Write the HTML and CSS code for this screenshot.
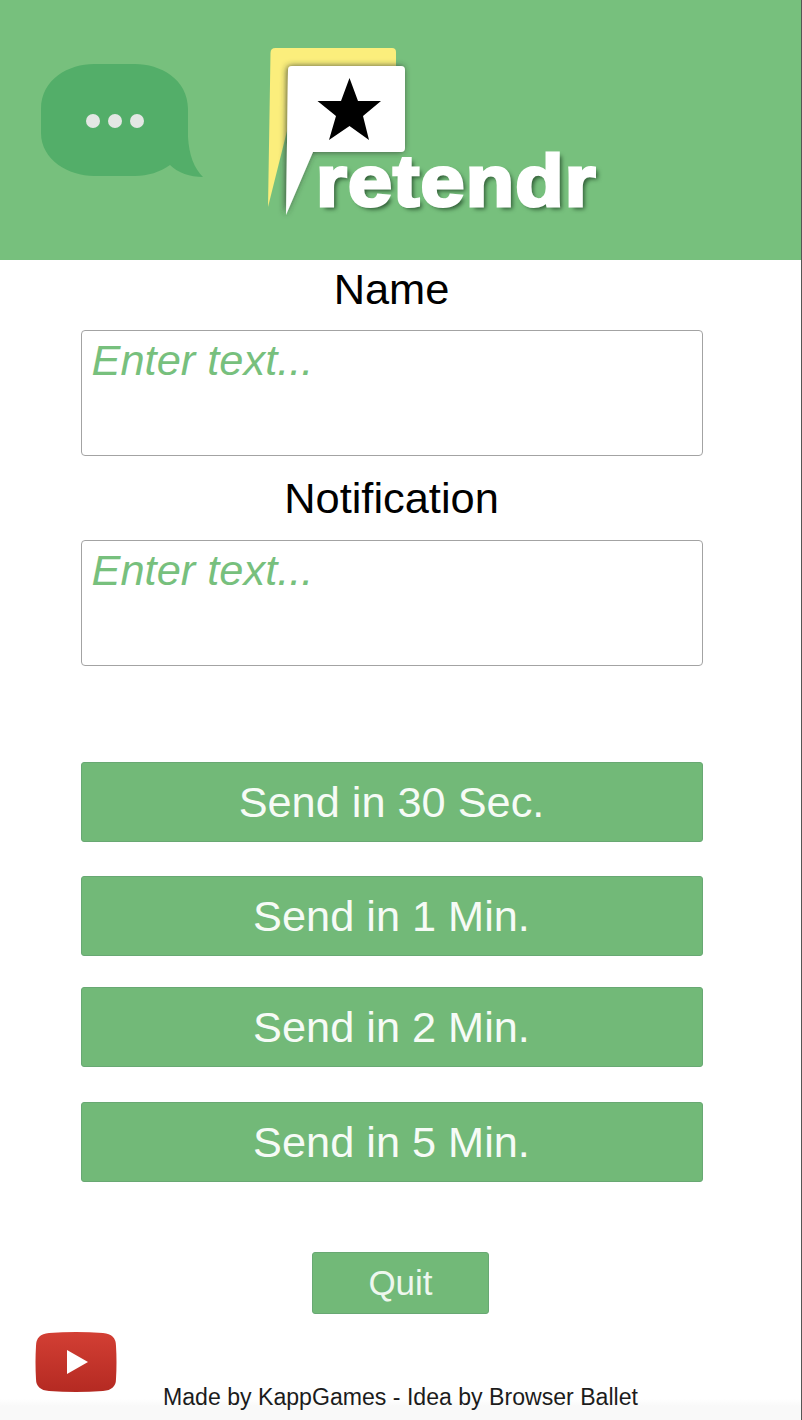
FILE: index.html
```html
<!DOCTYPE html>
<html lang="en">
<head>
    <meta charset="UTF-8">
    <meta name="viewport" content="width=device-width, initial-scale=1.0">
    <title>Pretendr</title>
    <link rel="stylesheet" href="styles.css">
</head>
<body>
    <header class="top">
        <svg class="bubble" width="166" height="116" viewBox="0 0 166 116">
            <path fill="#53ae69" d="M54 1H95C120 1 148 16 148 46V74C149 92 154 105 163 114C150 114 138 110 130 102C120 109 108 113 95 113H54C29 113 1 97 1 70V46C1 16 29 1 54 1Z"/>
            <circle cx="53" cy="58" r="7" fill="#e4e7e4"/>
            <circle cx="75" cy="58" r="7" fill="#e4e7e4"/>
            <circle cx="97" cy="58" r="7" fill="#e4e7e4"/>
        </svg>
        <div class="logo">
            <svg width="150" height="180" viewBox="0 0 150 180">
                <defs>
                    <filter id="soft" x="-20%" y="-20%" width="140%" height="140%">
                        <feDropShadow dx="-1" dy="0" stdDeviation="3" flood-color="#2e3a2e" flood-opacity="0.85"/>
                    </filter>
                </defs>
                <path fill="#fbee7c" d="M2.500 6Q2.500 1 7.500 1H124Q128 1 128 5V40H30L0 160Z"/>
                <path fill="#fff" filter="url(#soft)" d="M24 19H133Q137 19 137 23V101Q137 105 133 105H45L18 168L20 23Q20 19 24 19Z"/>
                <path fill="#000" d="M81.500 31L90 54H113L95 69L101 93L81.500 79L61 93L68 69L49.500 54H73Z"/>
            </svg>
            <span class="logo-text">retendr</span>
        </div>
    </header>

    <main class="content">
        <label class="title first">Name</label>
        <textarea class="field" placeholder="Enter text..."></textarea>
        <label class="title second">Notification</label>
        <textarea class="field" placeholder="Enter text..."></textarea>

        <div class="sends">
            <button class="send">Send in 30 Sec.</button>
            <button class="send">Send in 1 Min.</button>
            <button class="send">Send in 2 Min.</button>
            <button class="send">Send in 5 Min.</button>
        </div>

        <button class="quit">Quit</button>
    </main>

    <footer class="bottom">
        <svg class="yt" width="82" height="61" viewBox="0 0 82 61">
            <defs>
                <linearGradient id="red" x1="0" y1="0" x2="0" y2="1">
                    <stop offset="0" stop-color="#d33f34"/>
                    <stop offset="1" stop-color="#b52a22"/>
                </linearGradient>
            </defs>
            <path fill="url(#red)" d="M14 1Q41 -1 68 1Q81 2 81 14Q82 30 81 47Q81 58 68 59Q41 61 14 59Q1 58 1 47Q0 30 1 14Q1 2 14 1Z"/>
            <path fill="#fff" d="M32 18L53 30L32 42Z"/>
        </svg>
        <p class="credit">Made by KappGames - Idea by Browser Ballet</p>
    </footer>
</body>
</html>
```

FILE: styles.css
```css
html, body {
    margin: 0;
    height: 1420px;
    overflow: hidden;
}
body {
    font-family: "Liberation Sans", Arial, sans-serif;
    background-color: #fff;
    border-right: 1px solid #555;
    box-sizing: border-box;
    width: 802px;
}
.top {
    display: flex;
    align-items: flex-start;
    height: 260px;
    margin-right: -1px;
    padding: 47px 0 0 40px;
    box-sizing: border-box;
    background-color: #77c07d;
}
.bubble {
    margin-top: 16px;
}
.logo {
    position: relative;
    margin-left: 62px;
    width: 340px;
    height: 180px;
}
.logo-text {
    position: absolute;
    left: 48px;
    top: 89px;
    font-size: 72px;
    line-height: 90px;
    font-weight: bold;
    letter-spacing: 1px;
    color: #fff;
    -webkit-text-stroke: 3px #fff;
    text-shadow: 3px 3px 4px #2f5a35;
    transform: scaleX(1.1);
    transform-origin: left center;
}
.content {
    display: flex;
    flex-direction: column;
    align-items: center;
    width: 622px;
    margin-left: 80.5px;
}
.title {
    font-size: 43.4px;
    line-height: 50px;
    color: #000;
}
.first {
    margin: 4px 0 16px;
}
.second {
    margin: 17px 0 17px;
}
.field {
    display: block;
    width: 100%;
    height: 126px;
    padding: 4px 10px 6px;
    box-sizing: border-box;
    border: 1px solid #a3a3a3;
    border-radius: 4px;
    background: #fff;
    font-family: inherit;
    font-size: 43.4px;
    line-height: 50px;
    font-style: italic;
    resize: none;
    outline: none;
}
.field::placeholder {
    color: #77c07d;
    opacity: 1;
}
.sends {
    display: flex;
    flex-direction: column;
    width: 100%;
    margin-top: 96px;
}
.send {
    height: 80px;
    margin-bottom: 34px;
    padding: 0;
    border: 1px solid #68a873;
    border-radius: 3px;
    background-color: #72b978;
    color: #f6fbf6;
    font-family: inherit;
    font-size: 43.3px;
}
.send:nth-child(2) {
    margin-bottom: 31px;
}
.send:nth-child(3) {
    margin-bottom: 35px;
}
.send:last-child {
    margin-bottom: 0;
}
.quit {
    align-self: flex-start;
    width: 177px;
    height: 62px;
    margin: 70px 0 0 231.5px;
    padding: 0;
    border: 1px solid #68a873;
    border-radius: 3px;
    background-color: #72b978;
    color: #eef7ee;
    font-family: inherit;
    font-size: 35px;
}
.bottom {
    display: flex;
    align-items: flex-start;
    height: 88px;
    margin-top: 18px;
    padding-left: 35px;
    background: linear-gradient(to bottom, #fff 76%, #f9f9f9 84%);
    box-sizing: border-box;
}
.credit {
    margin: 50px 0 0 46px;
    font-size: 23.1px;
    line-height: 30px;
    color: #1c1c1c;
    white-space: nowrap;
}
```
